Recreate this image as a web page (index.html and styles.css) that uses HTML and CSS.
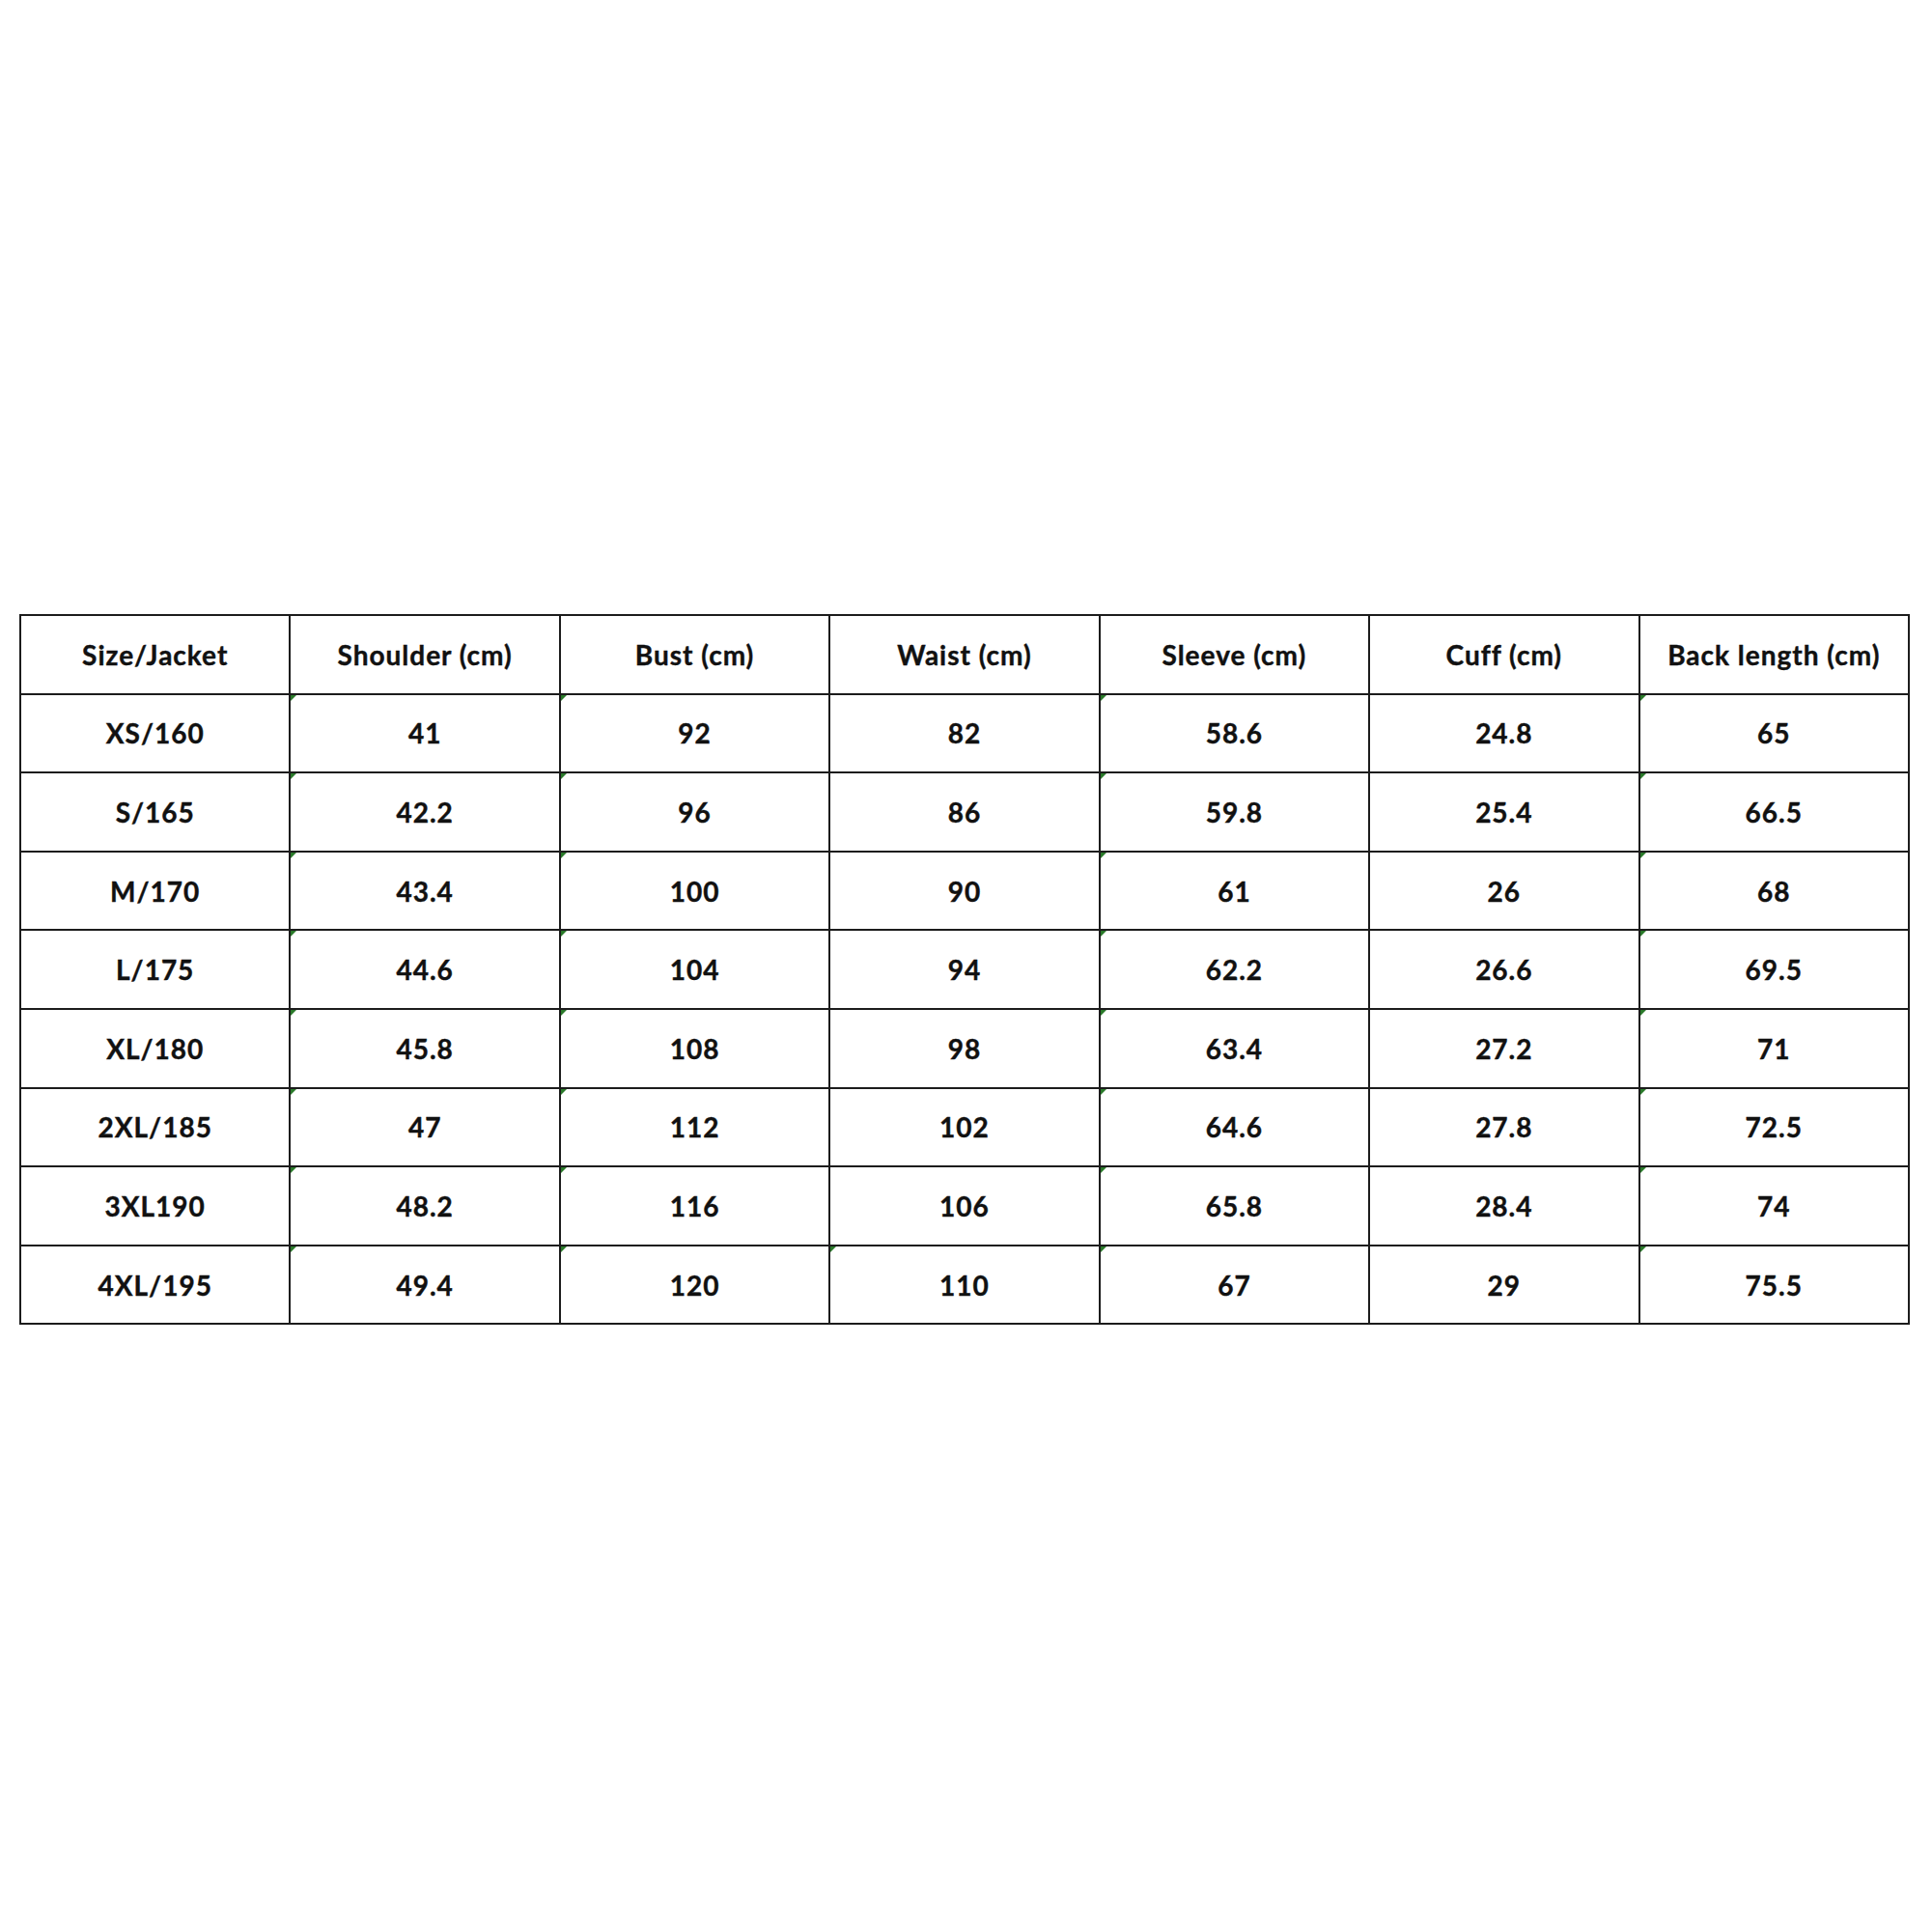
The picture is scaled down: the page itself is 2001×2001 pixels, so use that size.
FILE: index.html
```html
<!DOCTYPE html>
<html>
<head>
<meta charset="utf-8">
<link rel="stylesheet" href="styles.css">
</head>
<body>
<div class="page">
<table class="sizes">
<tr class="head"><td>Size/Jacket</td><td>Shoulder (cm)</td><td>Bust (cm)</td><td>Waist (cm)</td><td>Sleeve (cm)</td><td>Cuff (cm)</td><td>Back length (cm)</td></tr>
<tr><td>XS/160</td><td class="m">41</td><td class="m">92</td><td>82</td><td class="m">58.6</td><td>24.8</td><td class="m">65</td></tr>
<tr><td>S/165</td><td class="m">42.2</td><td class="m">96</td><td>86</td><td class="m">59.8</td><td>25.4</td><td class="m">66.5</td></tr>
<tr><td>M/170</td><td class="m">43.4</td><td class="m">100</td><td>90</td><td class="m">61</td><td>26</td><td class="m">68</td></tr>
<tr><td>L/175</td><td class="m">44.6</td><td class="m">104</td><td>94</td><td class="m">62.2</td><td>26.6</td><td class="m">69.5</td></tr>
<tr><td>XL/180</td><td class="m">45.8</td><td class="m">108</td><td>98</td><td class="m">63.4</td><td>27.2</td><td class="m">71</td></tr>
<tr><td>2XL/185</td><td class="m">47</td><td class="m">112</td><td>102</td><td class="m">64.6</td><td>27.8</td><td class="m">72.5</td></tr>
<tr><td>3XL190</td><td class="m">48.2</td><td class="m">116</td><td>106</td><td class="m">65.8</td><td>28.4</td><td class="m">74</td></tr>
<tr><td>4XL/195</td><td class="m">49.4</td><td class="m">120</td><td class="m">110</td><td class="m">67</td><td>29</td><td class="m">75.5</td></tr>
</table>
</div>
</body>
</html>
```
FILE: styles.css
```css
html, body {
  margin: 0;
  padding: 0;
  background: #ffffff;
}
.page {
  width: 2001px;
  height: 2001px;
  padding-top: 636px;
  padding-left: 20px;
  box-sizing: border-box;
}
.sizes {
  border-collapse: collapse;
  table-layout: fixed;
  width: 1958px;
  font-family: Lato, "Open Sans", sans-serif;
  font-weight: 700;
  font-size: 28px;
  letter-spacing: 1px;
  color: #111111;
  -webkit-text-stroke: 0.4px #111111;
}
.sizes td {
  position: relative;
  border: 2px solid #1c1c1c;
  height: 79.6px;
  padding: 0;
  text-align: center;
  vertical-align: middle;
}
.sizes td.m::before {
  content: "";
  position: absolute;
  top: 0;
  left: 0;
  width: 0;
  height: 0;
  border-top: 6px solid #2a7a2a;
  border-right: 6px solid transparent;
}
```
